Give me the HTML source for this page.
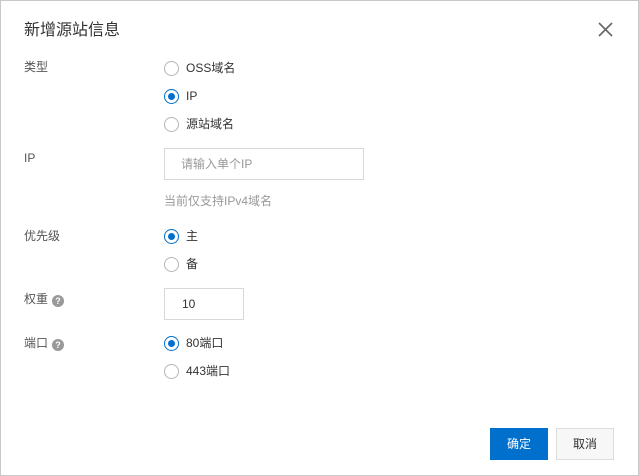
<!DOCTYPE html><html><head><meta charset="utf-8"><style>
*{margin:0;padding:0;box-sizing:border-box}
body{width:639px;height:476px;background:#fff;font-family:"Liberation Sans","Noto Sans CJK SC",sans-serif;font-size:12px;color:#333;position:relative;overflow:hidden}
.frame{position:absolute;left:0;top:0;width:639px;height:476px;border:1px solid #c8c8c8}
.a{position:absolute;white-space:nowrap;line-height:17px}
.lbl{color:#555;font-size:12px}
.r{position:absolute;width:15px;height:15px;border:1px solid #b5b5b5;border-radius:50%;background:#fff}
.r.on{border-color:#0070cc}
.r.on:after{content:"";position:absolute;left:3px;top:3px;width:7px;height:7px;border-radius:50%;background:#0070cc}
.q{display:inline-block;width:12px;height:12px;border-radius:50%;background:#999;color:#fff;font-size:9px;font-weight:bold;text-align:center;line-height:12px;vertical-align:-1px;margin-left:4px}
.inp{position:absolute;border:1px solid #d8d8d8;background:#fff}
</style></head><body><div class="frame"></div>
<div class="a" style="left:24px;top:20px;font-size:16px;line-height:22px;color:#333">新增源站信息</div>
<svg class="a" style="left:598px;top:22px" width="15" height="15" viewBox="0 0 15 15"><path d="M1 1L14 14M14 1L1 14" stroke="#666" stroke-width="1.6"/></svg>
<div class="a lbl" style="left:24px;top:59px">类型</div>
<div class="r" style="left:164px;top:61px"></div><div class="a" style="left:186px;top:60px">OSS域名</div>
<div class="r on" style="left:164px;top:89px"></div><div class="a" style="left:186px;top:88px">IP</div>
<div class="r" style="left:164px;top:117px"></div><div class="a" style="left:186px;top:116px">源站域名</div>
<div class="a lbl" style="left:24px;top:150px">IP</div>
<div class="inp" style="left:164px;top:148px;width:200px;height:32px"></div>
<div class="a" style="left:181px;top:156px;color:#999">请输入单个IP</div>
<div class="a" style="left:164px;top:193px;color:#999">当前仅支持IPv4域名</div>
<div class="a lbl" style="left:24px;top:228px">优先级</div>
<div class="r on" style="left:164px;top:229px"></div><div class="a" style="left:186px;top:228px">主</div>
<div class="r" style="left:164px;top:257px"></div><div class="a" style="left:186px;top:256px">备</div>
<div class="a lbl" style="left:24px;top:291px">权重<span class="q">?</span></div>
<div class="inp" style="left:164px;top:288px;width:80px;height:32px"></div>
<div class="a" style="left:182px;top:296px">10</div>
<div class="a lbl" style="left:24px;top:335px">端口<span class="q">?</span></div>
<div class="r on" style="left:164px;top:336px"></div><div class="a" style="left:186px;top:335px">80端口</div>
<div class="r" style="left:164px;top:364px"></div><div class="a" style="left:186px;top:363px">443端口</div>
<div class="a" style="left:490px;top:428px;width:58px;height:32px;background:#0070cc;color:#fff;text-align:center;line-height:32px">确定</div>
<div class="a" style="left:556px;top:428px;width:58px;height:32px;background:#f7f7f7;border:1px solid #ddd;color:#333;text-align:center;line-height:30px">取消</div>
</body></html>
